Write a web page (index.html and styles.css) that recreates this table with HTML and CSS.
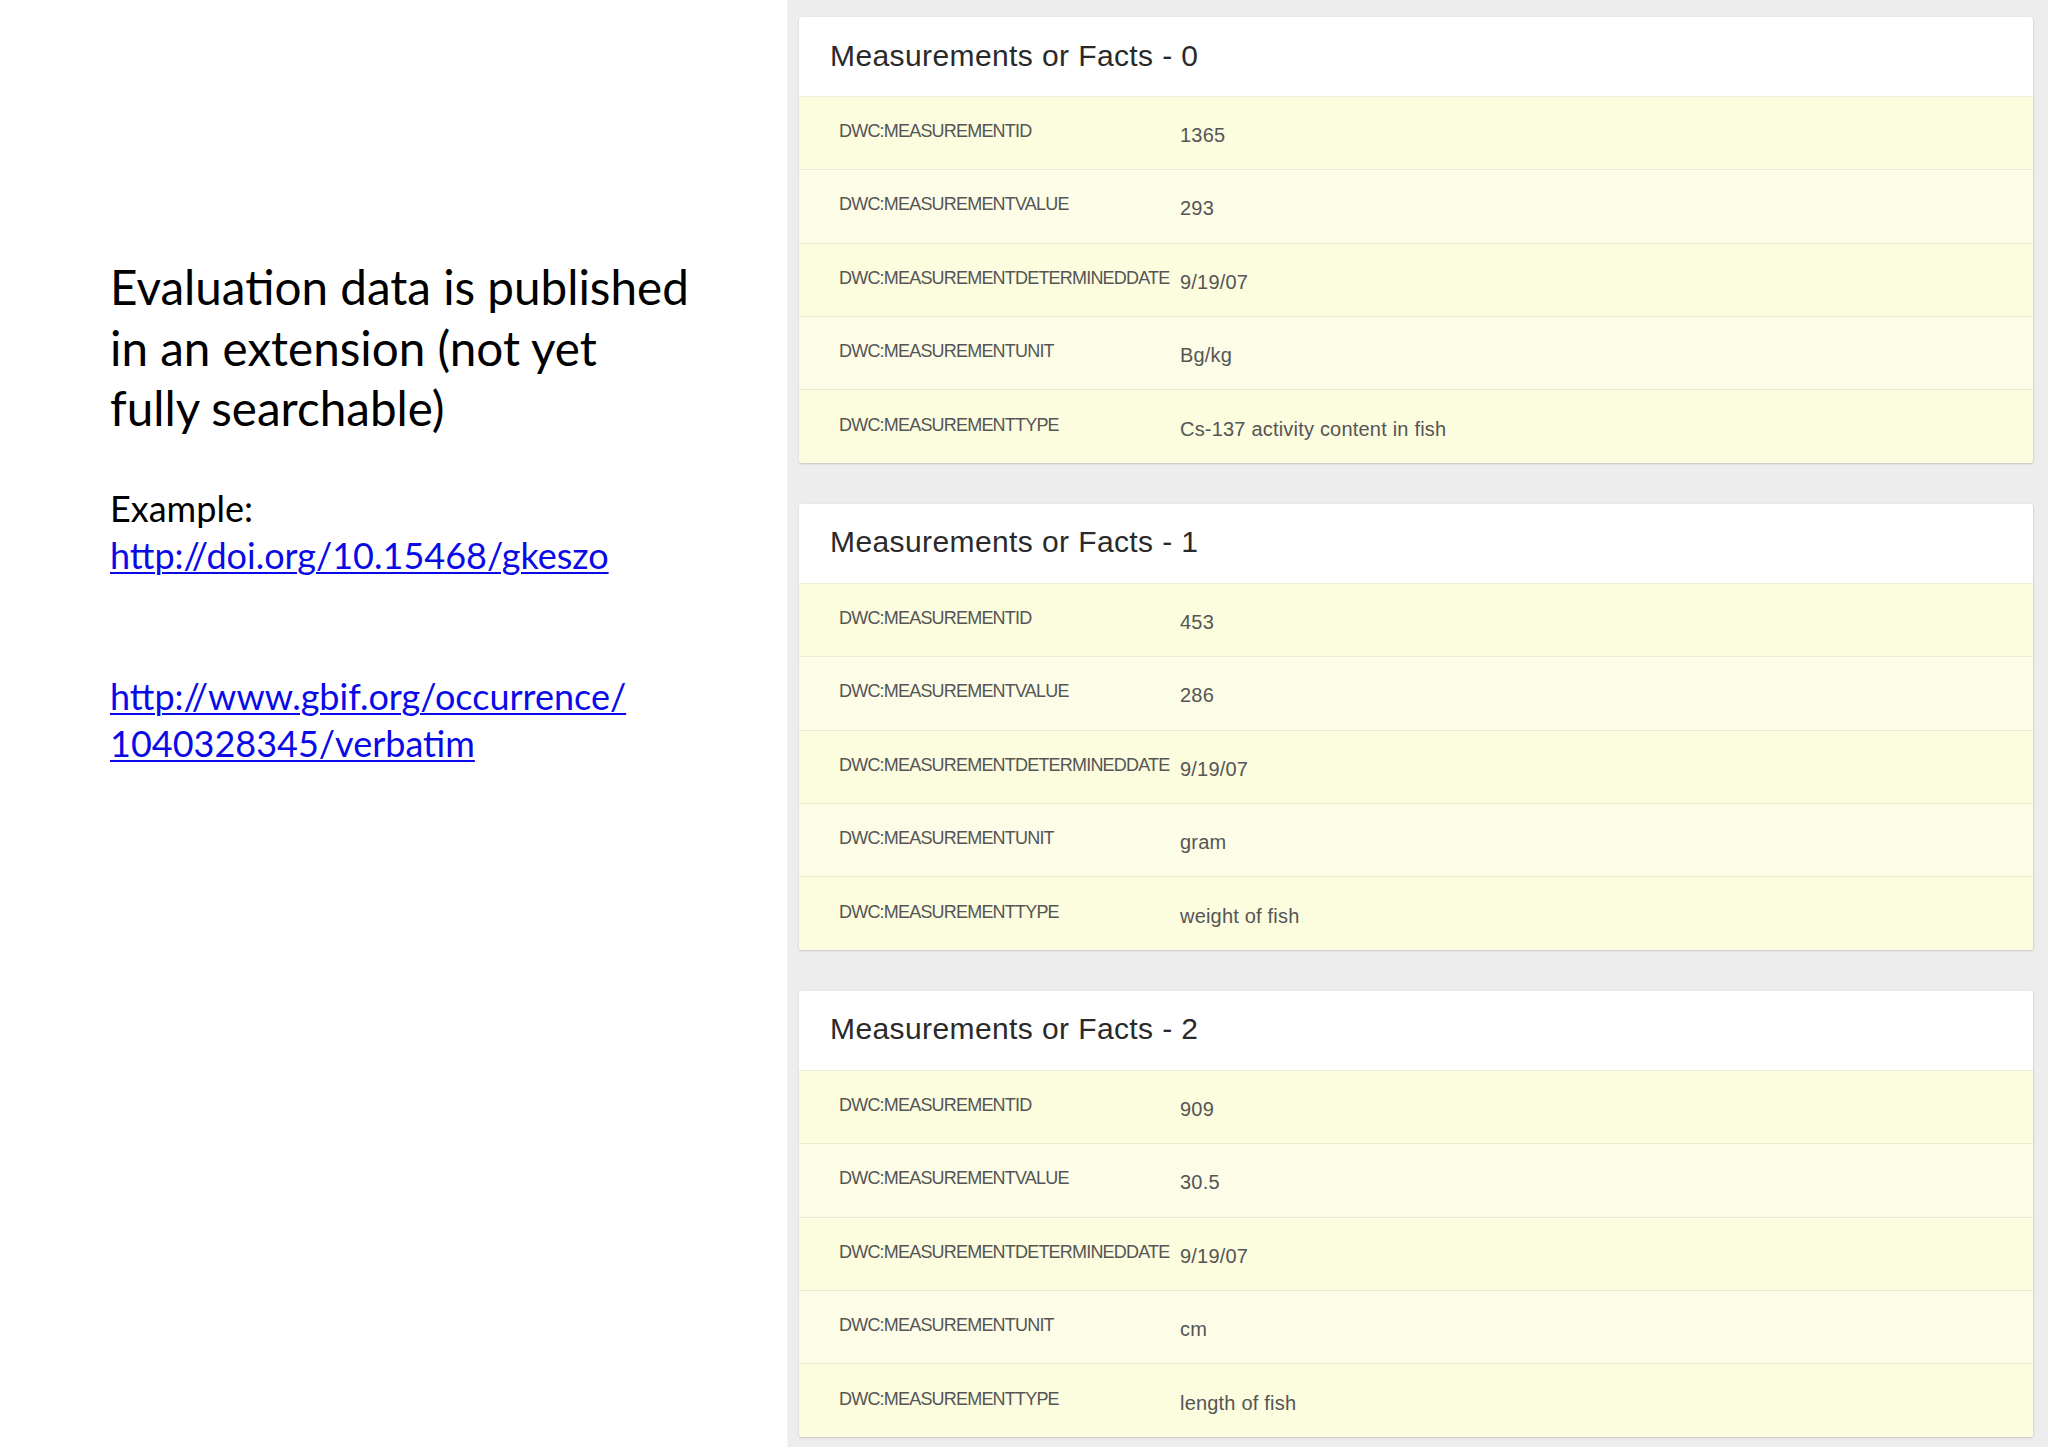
FILE: index.html
```html
<!DOCTYPE html>
<html lang="en">
<head>
<meta charset="utf-8">
<title>Measurements or Facts</title>
<link rel="stylesheet" href="styles.css">
</head>
<body>
<main class="slide">
  <aside class="notes">
    <h1 class="lead">Evaluation data is published<br>in an extension (not yet<br>fully searchable)</h1>
    <p class="example">Example:<br><a href="#">http://doi.org/10.15468/gkeszo</a></p>
    <p class="example gbif"><a href="#">http://www.gbif.org/occurrence/<br>1040328345/verbatim</a></p>
  </aside>
  <section class="records">
    <article class="card">
      <header class="card-title">Measurements or Facts - 0</header>
      <div class="row"><span class="key">DWC:MEASUREMENTID</span><span class="val">1365</span></div>
      <div class="row"><span class="key">DWC:MEASUREMENTVALUE</span><span class="val">293</span></div>
      <div class="row"><span class="key">DWC:MEASUREMENTDETERMINEDDATE</span><span class="val">9/19/07</span></div>
      <div class="row"><span class="key">DWC:MEASUREMENTUNIT</span><span class="val">Bg/kg</span></div>
      <div class="row"><span class="key">DWC:MEASUREMENTTYPE</span><span class="val">Cs-137 activity content in fish</span></div>
    </article>
    <article class="card">
      <header class="card-title">Measurements or Facts - 1</header>
      <div class="row"><span class="key">DWC:MEASUREMENTID</span><span class="val">453</span></div>
      <div class="row"><span class="key">DWC:MEASUREMENTVALUE</span><span class="val">286</span></div>
      <div class="row"><span class="key">DWC:MEASUREMENTDETERMINEDDATE</span><span class="val">9/19/07</span></div>
      <div class="row"><span class="key">DWC:MEASUREMENTUNIT</span><span class="val">gram</span></div>
      <div class="row"><span class="key">DWC:MEASUREMENTTYPE</span><span class="val">weight of fish</span></div>
    </article>
    <article class="card">
      <header class="card-title">Measurements or Facts - 2</header>
      <div class="row"><span class="key">DWC:MEASUREMENTID</span><span class="val">909</span></div>
      <div class="row"><span class="key">DWC:MEASUREMENTVALUE</span><span class="val">30.5</span></div>
      <div class="row"><span class="key">DWC:MEASUREMENTDETERMINEDDATE</span><span class="val">9/19/07</span></div>
      <div class="row"><span class="key">DWC:MEASUREMENTUNIT</span><span class="val">cm</span></div>
      <div class="row"><span class="key">DWC:MEASUREMENTTYPE</span><span class="val">length of fish</span></div>
    </article>
  </section>
</main>
</body>
</html>
```
FILE: styles.css
```css
html, body {
  margin: 0;
  padding: 0;
  background: #ffffff;
}

.slide {
  display: flex;
  width: 2048px;
  height: 1447px;
  overflow: hidden;
}

.notes {
  width: 787px;
  flex: none;
  box-sizing: border-box;
  padding: 257px 0 0 110px;
  background: #ffffff;
  font-family: Lato, "Open Sans", sans-serif;
  color: #000000;
}

.lead {
  margin: 0;
  font-weight: 400;
  font-size: 47.6px;
  line-height: 60.5px;
}

.example {
  margin: 46px 0 0 0;
  font-size: 36px;
  line-height: 47px;
}

.example.gbif {
  margin-top: 94px;
}

.example a {
  color: #0a0ae8;
  text-decoration: underline;
  text-decoration-thickness: 2px;
  text-underline-offset: 3px;
}

.records {
  flex: 1;
  display: flex;
  flex-direction: column;
  gap: 40.5px;
  padding: 17px 15px 0 11px;
  background: #ededed;
  border-left: 1px solid #f4f4f4;
  font-family: "Liberation Sans", Arial, Helvetica, sans-serif;
}

.card {
  flex: none;
  background: #ffffff;
  border-radius: 3px;
  overflow: hidden;
  box-shadow: 0 1px 2px rgba(0, 0, 0, 0.16), 1px 0 2px rgba(0, 0, 0, 0.06);
}

.card-title {
  box-sizing: border-box;
  height: 80px;
  display: flex;
  align-items: center;
  padding: 0 0 2px 31px;
  border-bottom: 1px solid #eeeedc;
  font-size: 30px;
  letter-spacing: 0.4px;
  color: #2a2a2a;
}

.row {
  box-sizing: border-box;
  height: 73.3px;
  display: grid;
  grid-template-columns: 341px 1fr;
  align-items: center;
  padding-left: 40px;
  background: #fcfcdf;
  border-bottom: 1px solid #ececd6;
}

.row:nth-child(odd) {
  background: #fdfde7;
}

.row:last-child {
  border-bottom: 0;
}

.key {
  font-size: 18px;
  letter-spacing: -0.8px;
  color: #555555;
  padding-bottom: 3px;
}

.val {
  font-size: 20px;
  letter-spacing: 0.2px;
  color: #555555;
  padding-top: 5px;
}
```
